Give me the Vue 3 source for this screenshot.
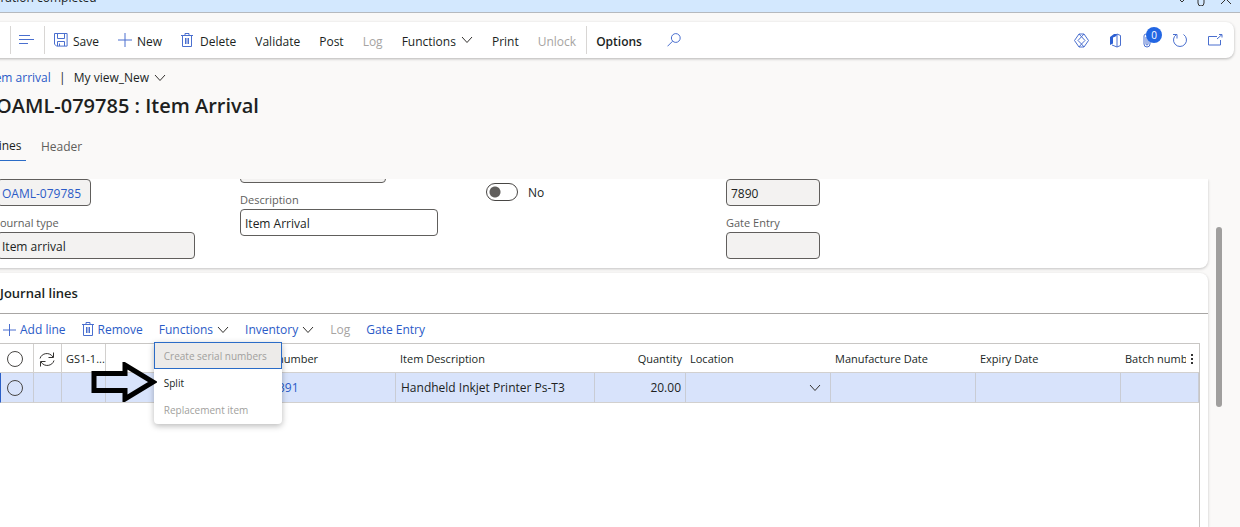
<script setup>
import { ref } from 'vue'

const isDefault = ref(false)
const fields = ref({ journal: 'OAML-079785', type: 'Item arrival', name: '', description: 'Item Arrival', code: '7890', gate: '' })
const row = { number: '391', description: 'Handheld Inkjet Printer Ps-T3', quantity: '20.00' }
</script>

<template>
  <div class="page">
    <div class="banner">
      <span>Operation completed</span>
      <div class="banner-icons">
        <svg width="8" height="20" viewBox="0 0 8 20"><path d="M2 14l2 2 2-2" /></svg>
        <svg width="10" height="20" viewBox="0 0 10 20"><path d="M2 14v3a3 3 0 0 0 6 0v-3" /></svg>
        <button class="plain" aria-label="Close"><svg width="12" height="20" viewBox="0 0 12 20"><path d="M1 8l10 10M11 8L1 18" /></svg></button>
      </div>
    </div>

    <header class="toolbar">
      <span class="sep"></span>
      <button class="tool menu-btn" aria-label="Show list">
        <svg width="15" height="12" viewBox="0 0 15 12"><path d="M0 1.500h11M0 5.500h15M0 9.500h9" /></svg>
      </button>
      <span class="sep"></span>
      <button class="tool">
        <svg width="14" height="14" viewBox="0 0 14 14"><path d="M.5.5h12.600v12.600H2.500l-2-2zM3.500.5v5h7v-5M3.500 13V8.500h7V13M5.500 10.500V13" /></svg>Save
      </button>
      <button class="tool">
        <svg width="14" height="14" viewBox="0 0 14 14"><path d="M7 0v14M0 7h14" /></svg>New
      </button>
      <button class="tool del">
        <svg width="12" height="15" viewBox="0 0 12 15"><path d="M0 2.500h12M4 2.500v-2h4v2M1.500 2.500v11h9v-11M4.500 5v6M6 5v6M7.500 5v6" /></svg>Delete
      </button>
      <button class="tool">Validate</button>
      <button class="tool">Post</button>
      <button class="tool" disabled>Log</button>
      <button class="tool">Functions<svg class="chev" width="12" height="8" viewBox="0 0 12 8"><path d="M1 1l5 5.500L11 1" /></svg></button>
      <button class="tool">Print</button>
      <button class="tool" disabled>Unlock</button>
      <span class="sep"></span>
      <button class="tool strong">Options</button>
      <button class="tool search" aria-label="Search">
        <svg width="14" height="14" viewBox="0 0 14 14"><circle cx="8.800" cy="5" r="4.400" /><path d="M5.600 8.200L.5 13.300" /></svg>
      </button>
      <div class="right-tools">
        <button class="plain" aria-label="Power Apps">
          <svg width="15" height="15" viewBox="0 0 15 15"><path d="M5 1h5l4.500 6.500L10 14H5L.5 7.500zM5 1l6 6.500L7.500 11 4 7.500 10 1M5 14l2.500-3L10 14" /></svg>
        </button>
        <button class="plain" aria-label="Open in Office">
          <svg width="13" height="15" viewBox="0 0 13 15"><path d="M5 3.500L8 1l3.500 1.500v10L8 14l-5-2M8 1v13" /><path class="solid" d="M1 4l4-3h2.500v2L4 4.500v6L1 12z" /></svg>
        </button>
        <button class="plain attach" aria-label="Attachments">
          <svg width="10" height="16" viewBox="0 0 10 16"><path d="M2 4v8a3 3 0 0 0 6 0V4M4 5v7a1 1 0 0 0 2 0V5M2 4a2 2 0 0 1 4 0" /></svg>
          <span class="badge">0</span>
        </button>
        <button class="plain" aria-label="Refresh">
          <svg width="16" height="16" viewBox="0 0 16 16"><path d="M4.500 2.500A6.500 6.500 0 1 0 11.500 2.500M1 2.500h4v4" /></svg>
        </button>
        <button class="plain" aria-label="Open in new window">
          <svg width="15" height="14" viewBox="0 0 15 14"><path d="M9 3.500H.5v8.500h12V7M9 6l5-4.500M11 1.500H14V4.500" /></svg>
        </button>
      </div>
    </header>

    <nav class="crumbs">
      <a href="#">Item arrival</a><span class="bar">|</span>
      <button class="plain view">My view_New<svg class="chev" width="12" height="8" viewBox="0 0 12 8"><path d="M1 1l5 5.500L11 1" /></svg></button>
    </nav>
    <h1>OAML-079785 : Item Arrival</h1>
    <div class="tabs" role="tablist">
      <button class="tab active" role="tab" aria-selected="true">Lines</button>
      <button class="tab" role="tab" aria-selected="false">Header</button>
    </div>

    <main class="scroller">
      <div class="content">
        <section class="card form">
          <div>
            <input class="field short link" aria-label="Journal" v-model="fields.journal" readonly />
            <label for="jtype">Journal type</label>
            <input id="jtype" class="field" v-model="fields.type" readonly />
          </div>
          <div class="raised">
            <input class="field mid" aria-label="Name" v-model="fields.name" readonly />
            <label for="desc">Description</label>
            <input id="desc" class="field" v-model="fields.description" />
          </div>
          <div>
            <label class="switch"><input type="checkbox" role="switch" v-model="isDefault" /><span>{{ isDefault ? 'Yes' : 'No' }}</span></label>
          </div>
          <div>
            <input class="field short" aria-label="Code" v-model="fields.code" readonly />
            <label for="gate">Gate Entry</label>
            <input id="gate" class="field short" v-model="fields.gate" readonly />
          </div>
        </section>

        <section class="card lines">
          <h2>Journal lines</h2>
          <div class="actions">
            <button class="action"><svg width="13" height="14" viewBox="0 0 13 14"><path d="M6.500 1v12M0 7h13" /></svg>Add line</button>
            <button class="action"><svg width="12" height="15" viewBox="0 0 12 15"><path d="M0 2.500h12M4 2.500v-2h4v2M1.500 2.500v11h9v-11M4.500 5v6M6 5v6M7.500 5v6" /></svg>Remove</button>
            <div class="drop">
              <button class="action" aria-haspopup="menu" aria-expanded="true">Functions<svg class="chev" width="12" height="8" viewBox="0 0 12 8"><path d="M1 1l5 5.500L11 1" /></svg></button>
              <div class="menu" role="menu">
                <button role="menuitem" class="focused" disabled>Create serial numbers</button>
                <button role="menuitem">Split</button>
                <button role="menuitem" disabled>Replacement item</button>
                <svg class="arrow" width="66" height="40" viewBox="0 0 66 40"><path d="M3 11.500h31V3l28 17-28 17v-8.500H3z" /></svg>
              </div>
            </div>
            <button class="action">Inventory<svg class="chev" width="12" height="8" viewBox="0 0 12 8"><path d="M1 1l5 5.500L11 1" /></svg></button>
            <button class="action" disabled>Log</button>
            <button class="action">Gate Entry</button>
          </div>
          <div class="grid">
            <table>
              <colgroup>
                <col class="c-check" /><col class="c-sync" /><col class="c-gs" /><col class="c-blank" /><col class="c-num" /><col class="c-desc" /><col class="c-qty" /><col class="c-date" /><col class="c-date" /><col class="c-date" /><col />
              </colgroup>
              <thead>
                <tr>
                  <th class="pick"><input type="checkbox" aria-label="Select all" /></th>
                  <th class="pick">
                    <svg class="dark" width="16" height="15" viewBox="0 0 16 15"><path d="M1 6.500C2.500 1 10.500-.5 14 5M14.500.5V5.500H9.500M15 8.500C13.500 14 5.500 15.500 2 10M1.500 14.500V9.500H6.500" /></svg>
                  </th>
                  <th class="ruled">GS1-1...</th>
                  <th></th>
                  <th>number</th>
                  <th>Item Description</th>
                  <th class="num">Quantity</th>
                  <th>Location</th>
                  <th>Manufacture Date</th>
                  <th>Expiry Date</th>
                  <th class="last"><div><span>Batch number</span><button class="plain" aria-label="Column options"><svg class="dots" width="4" height="14" viewBox="0 0 4 14"><path d="M1 2h2v2H1zM1 6h2v2H1zM1 10h2v2H1z" /></svg></button></div></th>
                </tr>
              </thead>
              <tbody>
                <tr>
                  <td class="pick"><input type="checkbox" aria-label="Select row" /></td>
                  <td></td>
                  <td></td>
                  <td class="open"></td>
                  <td><a href="#">{{ row.number }}</a></td>
                  <td>{{ row.description }}</td>
                  <td class="num">{{ row.quantity }}</td>
                  <td><button class="plain pull" aria-label="Choose location"><svg class="chev" width="12" height="8" viewBox="0 0 12 8"><path d="M1 1l5 5.500L11 1" /></svg></button></td>
                  <td></td>
                  <td></td>
                  <td></td>
                </tr>
              </tbody>
            </table>
          </div>
        </section>
      </div>
      <div class="rail"><div class="thumb"></div></div>
    </main>
  </div>
</template>

<style>
body { background: #faf9f8; }
</style>

<style scoped>
.page {
  height: 100vh;
  overflow: hidden;
  display: flex;
  flex-direction: column;
  background: #faf9f8;
  color: #201f1e;
  font: 12px/18px "Open Sans", "Noto Sans", sans-serif;
}
.page * { box-sizing: border-box; }
button, input { font: inherit; color: inherit; }
button { border: 0; background: none; padding: 0; white-space: nowrap; }
a { color: #2b5bc7; text-decoration: none; }
svg { fill: none; stroke: #4a6fcf; stroke-width: 1; flex: none; display: block; }
.chev, .dark, .banner svg { stroke: #33312f; }
.solid, .dots { fill: #2b5fd3; stroke: none; }
.dots { fill: #333; }
.plain { display: flex; align-items: center; }

.banner {
  flex: none;
  height: 27px;
  margin-top: -14px;
  padding: 4px 8px 0 0;
  display: flex;
  justify-content: space-between;
  background: #d3e8fe;
  border-bottom: 1px solid #b5b9be;
}
.banner span { margin: -1px 0 0 -23px; }
.banner-icons { display: flex; align-items: flex-start; gap: 10px; margin-top: -4px; }
.banner-icons button { margin-left: 4px; }

.toolbar {
  flex: none;
  height: 36px;
  margin: 9px 6px 0 -12px;
  padding-left: 22px;
  display: flex;
  align-items: center;
  background: #fff;
  border-radius: 8px;
  box-shadow: 0 1px 3px rgba(0, 0, 0, .28);
}
.sep { width: 1px; height: 28px; background: #d8d6d4; }
.tool { height: 36px; padding: 3px 10px 0 9px; display: flex; align-items: center; gap: 5px; }
.tool svg { margin-top: -3px; }
.tool:disabled, .action:disabled { color: #a6a4a2; }
.menu-btn { width: 33px; padding: 3px 8px 0; }
.del { gap: 7px; }
.strong { font-weight: 600; }
.search { margin-left: 6px; }
.right-tools { margin-left: auto; padding-right: 11px; display: flex; align-items: center; gap: 20px; }
.attach { position: relative; }
.badge {
  position: absolute;
  left: 4px;
  top: -5px;
  width: 16px;
  height: 16px;
  border-radius: 8px;
  background: #2266e3;
  color: #fff;
  font-size: 10px;
  line-height: 16px;
}

.crumbs { flex: none; display: flex; margin: 11px 0 0 -13px; }
.bar { width: 23px; text-align: center; }
.view { gap: 5px; }
h1 { flex: none; margin: 5px 0 0 -4px; font-size: 20px; line-height: 28px; font-weight: 600; }
.tabs { flex: none; display: flex; margin: 16px 0 18px -12px; }
.tab { height: 25px; padding-bottom: 4px; color: #605e5c; }
.active { width: 38px; color: #201f1e; border-bottom: 1px solid #2b6cc7; margin-right: 15px; }

.scroller { flex: 1; min-height: 0; overflow: hidden; display: flex; }
.content { flex: 1; min-width: 0; display: flex; flex-direction: column; margin-left: -12px; }
.card { background: #fff; box-shadow: 0 1px 3px rgba(0, 0, 0, .22); padding-left: 12px; }
.form {
  flex: none;
  display: grid;
  grid-template-columns: 243px 246px 240px 1fr;
  padding: 0 0 9px 9px;
  border-radius: 0 0 8px 8px;
}
.form label { display: block; padding-top: 8px; height: 26px; font-size: 11px; color: #605e5c; }
.field {
  display: block;
  width: 198px;
  height: 27px;
  padding: 2px 4px 0;
  border: 1px solid #605e5c;
  border-radius: 4px;
  background: #fff;
}
.field[readonly] { background: #f3f2f1; }
.short { width: 94px; }
.mid { width: 146px; }
.link { color: #2b5bc7; }
.raised { margin-top: -23px; }
.form .switch { display: flex; align-items: center; gap: 10px; height: auto; padding-top: 2px; font-size: 12px; color: #201f1e; }
.switch span { padding-top: 3px; }
.switch input {
  appearance: none;
  width: 32px;
  height: 18px;
  margin: 0;
  border: 1px solid #484644;
  border-radius: 9px;
  background: radial-gradient(circle at 8px 8px, #605e5c 5px, transparent 6px);
}

.lines { flex: 1; margin-top: 5px; border-radius: 8px 8px 0 0; }
h2 { margin: 0 0 0 -12px; padding: 11px 0 11px 12px; font-size: 13px; line-height: 18px; font-weight: 600; border-bottom: 1px solid #a8a6a4; }
.actions { display: flex; align-items: center; gap: 16px; height: 29px; padding-left: 3px; }
.action { display: flex; align-items: center; gap: 4px; height: 29px; padding-top: 2px; color: #2b5bc7; }
.drop { position: relative; }
.menu {
  position: absolute;
  z-index: 2;
  left: -5px;
  top: 28px;
  width: 128px;
  padding-bottom: 1px;
  background: #fff;
  border-radius: 0 0 4px 4px;
  box-shadow: 0 2px 6px rgba(0, 0, 0, .28);
}
.menu button { display: block; width: 100%; height: 27px; padding: 0 10px; text-align: left; font-size: 10px; }
.menu button:disabled { color: #a19f9d; }
.menu .focused { padding: 0 9px; background: #edebe9; border: 1px solid #2b6cc7; }
.arrow { position: absolute; right: 125px; top: 20px; stroke: #000; stroke-width: 5; }

.grid { height: 100%; margin-right: 8px; border-top: 1px solid #c8c6c4; border-right: 1px solid #c8c6c4; }
table { width: 100%; table-layout: fixed; border-collapse: separate; border-spacing: 0; }
.c-check { width: 34px; }
.c-sync { width: 28px; }
.c-gs { width: 44px; }
.c-blank { width: 167px; }
.c-num { width: 123px; }
.c-desc { width: 199px; }
.c-qty { width: 91px; }
.c-date { width: 145px; }
th, td { padding: 0 4px 0 5px; text-align: left; font-weight: 400; white-space: nowrap; overflow: hidden; border-bottom: 1px solid #d2d0ce; }
th { height: 29px; padding: 2px 4px 0; font-size: 11px; }
td { height: 30px; background: #d8e3fb; border-right: 1px solid #c9ccd4; }
td:first-child { border-left: 1px solid #2b5fc7; }
th.pick, th.ruled { border-right: 1px solid #d2d0ce; }
td.open { border-right-color: transparent; }
.num { text-align: right; }
.pick svg { margin-left: 1px; }
.pick input {
  appearance: none;
  display: block;
  width: 16px;
  height: 16px;
  margin: 0 0 0 3px;
  border: 1px solid #484644;
  border-radius: 8px;
}
td.pick input { margin-left: 1px; }
.last div { display: flex; align-items: center; gap: 4px; }
.last span { width: 61px; overflow: hidden; }
.pull { margin: 0 5px 0 auto; }

.rail { width: 32px; }
.thumb { width: 6px; height: 180px; margin: 48px 0 0 8px; border-radius: 3px; background: #a09f9e; }
</style>
